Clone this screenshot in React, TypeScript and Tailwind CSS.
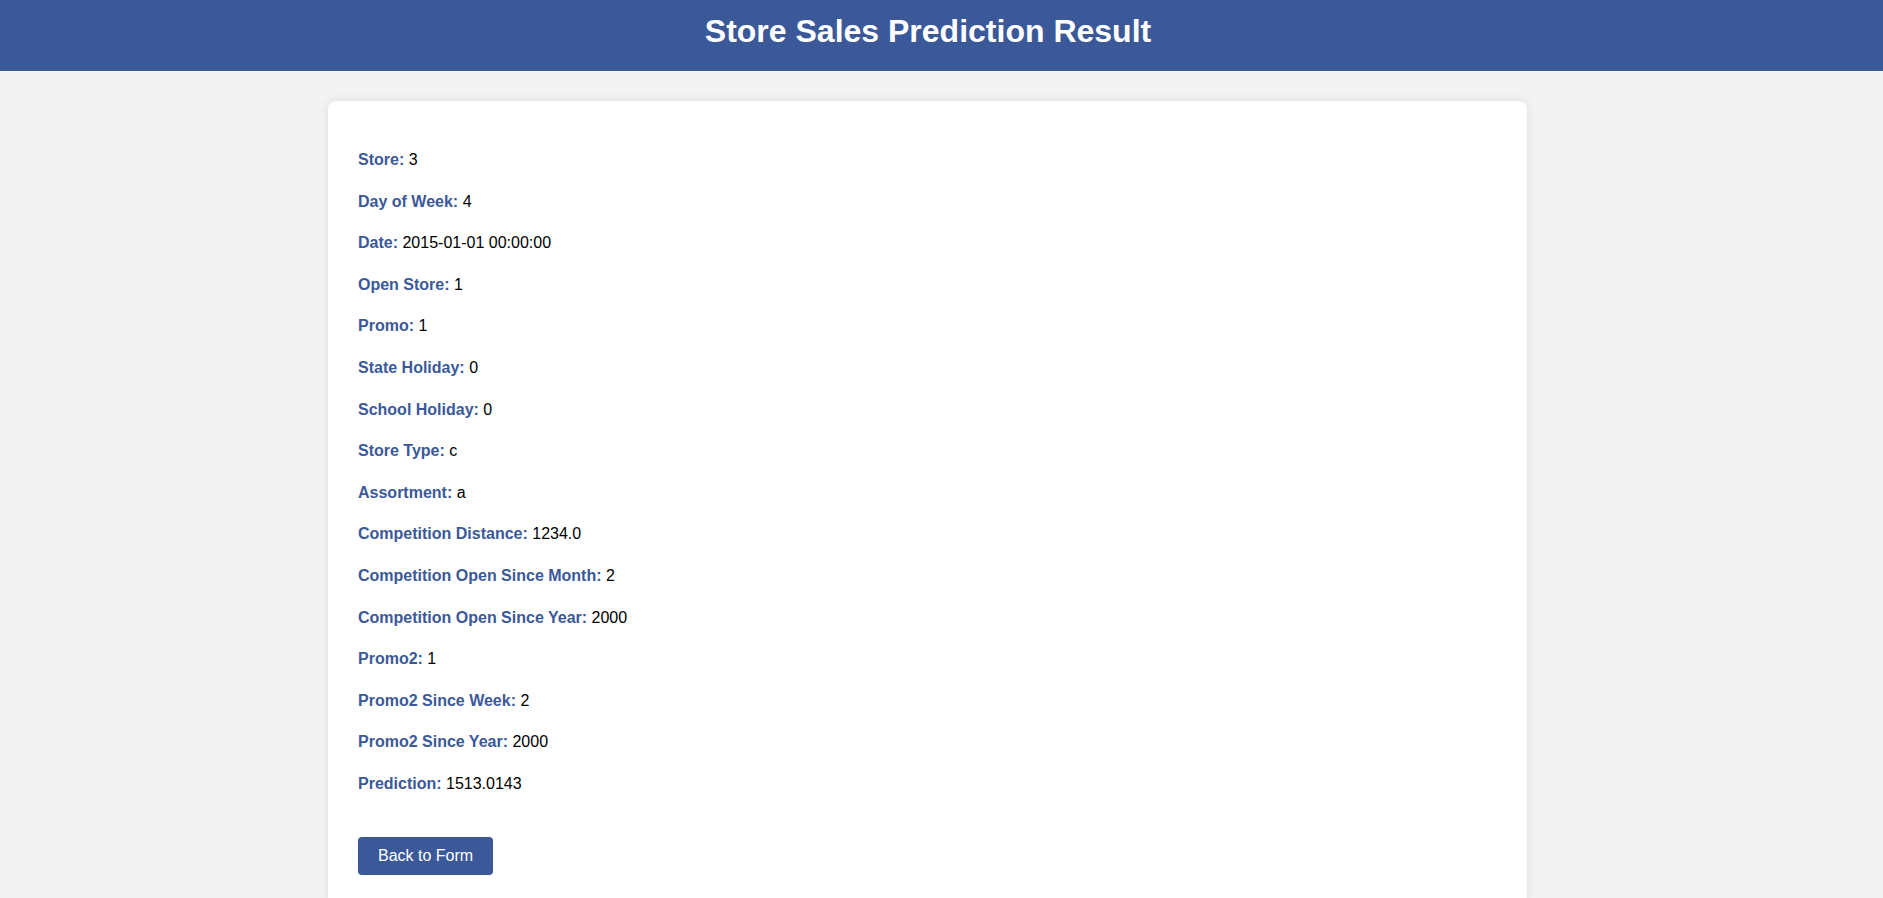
import React from 'react';

const ResultPage = () => {
  // values shown after the prediction request
  const fields = [
    { label: 'Store', value: '3' },
    { label: 'Day of Week', value: '4' },
    { label: 'Date', value: '2015-01-01 00:00:00' },
    { label: 'Open Store', value: '1' },
    { label: 'Promo', value: '1' },
    { label: 'State Holiday', value: '0' },
    { label: 'School Holiday', value: '0' },
    { label: 'Store Type', value: 'c' },
    { label: 'Assortment', value: 'a' },
    { label: 'Competition Distance', value: '1234.0' },
    { label: 'Competition Open Since Month', value: '2' },
    { label: 'Competition Open Since Year', value: '2000' },
    { label: 'Promo2', value: '1' },
    { label: 'Promo2 Since Week', value: '2' },
    { label: 'Promo2 Since Year', value: '2000' },
    { label: 'Prediction', value: '1513.0143' }
  ];

  return (
    <div className="min-h-screen bg-[#f3f3f3] font-['Liberation_Sans',Arial,sans-serif] text-black">
      <header className="h-[71px] bg-[#3b5998] pt-[13px] pr-[27px]">
        <h1 className="text-center text-[32px] leading-[37px] font-bold text-white">Store Sales Prediction Result</h1>
      </header>
      <main className="pr-[28px] pt-[30px] pb-[30px]">
        <div className="mx-auto w-[1199px] rounded-lg bg-white p-[30px] shadow-[0_0_10px_rgba(0,0,0,0.1)]">
          {fields.map((field) => (
            <p key={field.label} className="my-4 text-base leading-[1.6]">
              <strong className="font-bold text-[#3b5998]">{field.label}:</strong> {field.value}
            </p>
          ))}
          <div className="mt-[40px]">
            <button className="rounded-[4px] bg-[#3b5998] px-5 py-[10px] text-base leading-[18px] text-white">
              Back to Form
            </button>
          </div>
        </div>
      </main>
    </div>
  );
};

export default ResultPage;
